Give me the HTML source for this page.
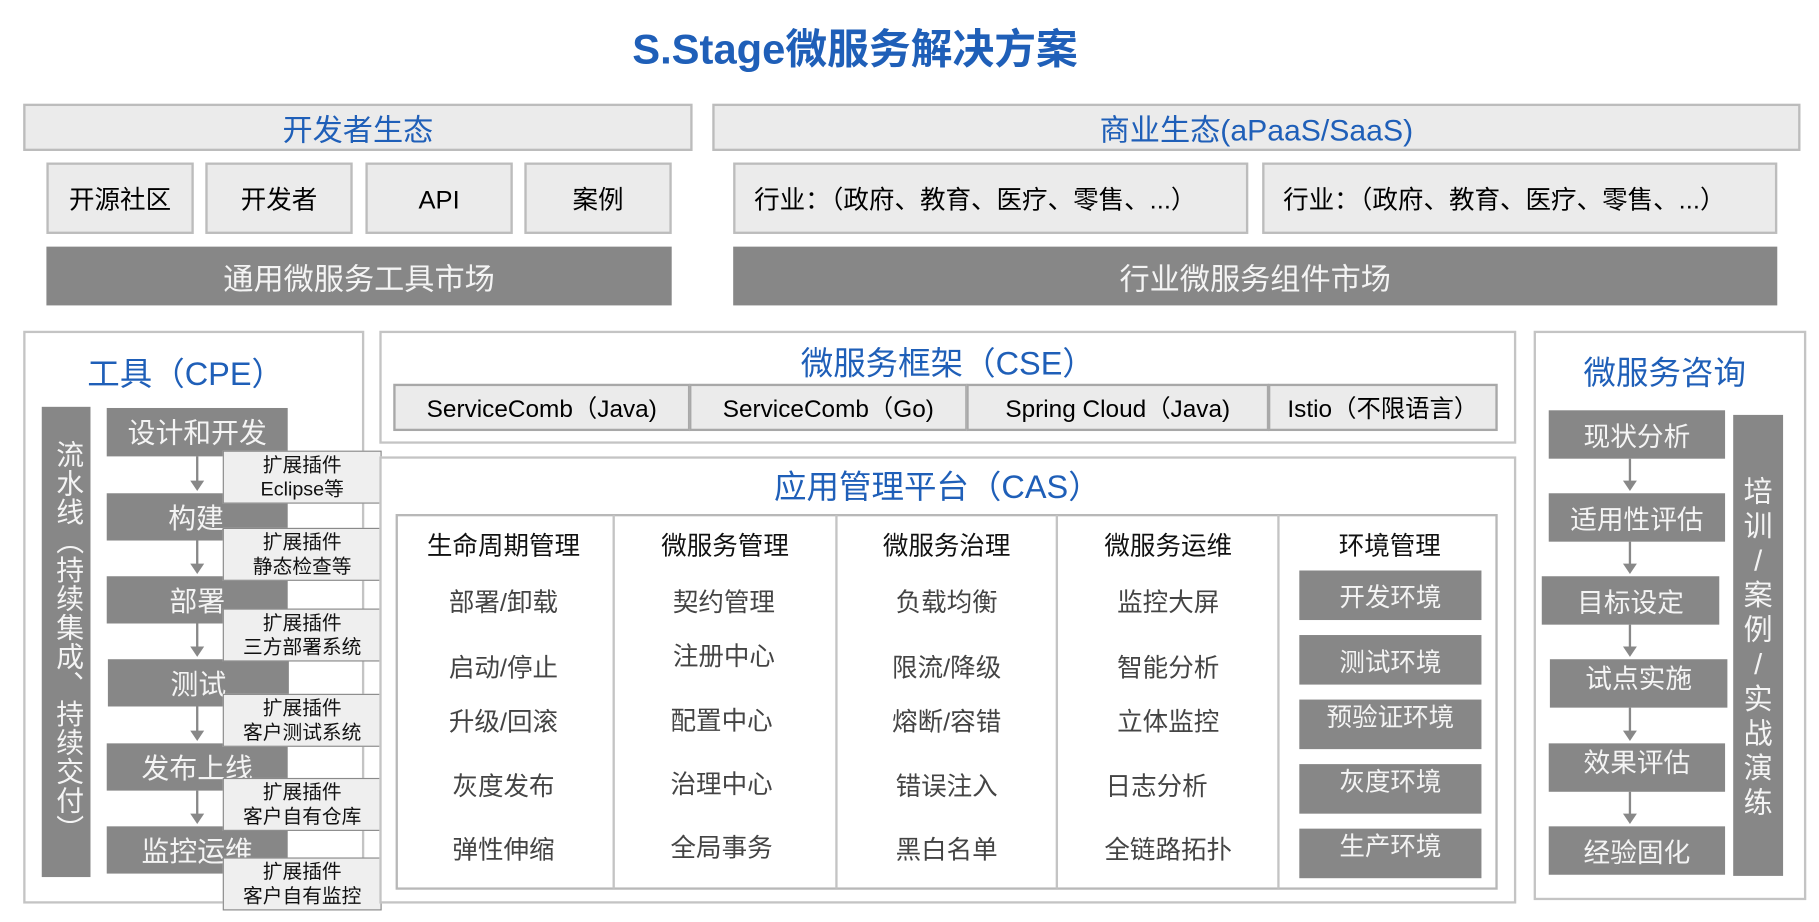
<!DOCTYPE html>
<html><head><meta charset="utf-8"><style>
html,body{margin:0;padding:0;background:#fff;width:1819px;height:922px;overflow:hidden}
#w{position:absolute;left:0;top:0;width:1568px;height:800px;transform-origin:0 0;transform:scale(1.1601,1.1525);font-family:"Liberation Sans","Noto Sans CJK SC",sans-serif}
.a{position:absolute;box-sizing:border-box;display:flex;align-items:center;justify-content:center;white-space:nowrap;line-height:1;padding-top:4px}
.lt{background:#ebebeb;border:2px solid #bcbcbc}
.dk{background:#878787;color:#f4f4f4}
.bl{color:#1f5fb8}
.fr{border:2px solid #c4c4c4;background:#fff}
.pl{background:#efefef;border:1.5px solid #8a8a8a;font-size:17px;flex-direction:column;line-height:21px;color:#111;padding-top:0}
.ar{position:absolute;width:2px;background:#888}
.ar:after{content:"";position:absolute;left:-5px;bottom:-2px;border-left:6px solid transparent;border-right:6px solid transparent;border-top:9px solid #888}
.it{position:absolute;font-size:22px;color:#444;text-align:center;width:190px}
.hd{position:absolute;font-size:22px;color:#111;text-align:center;width:190px;top:456px}
</style></head><body><div id="w">
<div class="a bl" style="left:437px;top:18px;width:600px;height:46px;font-size:36px;font-weight:bold">S.Stage微服务解决方案</div>

<div class="a lt bl" style="left:20px;top:90px;width:577px;height:41px;font-size:26px">开发者生态</div>
<div class="a lt bl" style="left:614px;top:90px;width:938px;height:41px;font-size:26px">商业生态(aPaaS/SaaS)</div>
<div class="a lt" style="left:40px;top:141px;width:127px;height:62px;font-size:22px">开源社区</div>
<div class="a lt" style="left:177px;top:141px;width:127px;height:62px;font-size:22px">开发者</div>
<div class="a lt" style="left:315px;top:141px;width:127px;height:62px;font-size:22px">API</div>
<div class="a lt" style="left:452px;top:141px;width:127px;height:62px;font-size:22px">案例</div>
<div class="a lt" style="left:632px;top:141px;width:444px;height:62px;font-size:22px;justify-content:flex-start;padding-left:16px">行业：（政府、教育、医疗、零售、...）</div>
<div class="a lt" style="left:1088px;top:141px;width:444px;height:62px;font-size:22px;justify-content:flex-start;padding-left:16px">行业：（政府、教育、医疗、零售、...）</div>
<div class="a dk" style="left:40px;top:214px;width:539px;height:51px;font-size:26px">通用微服务工具市场</div>
<div class="a dk" style="left:632px;top:214px;width:900px;height:51px;font-size:26px">行业微服务组件市场</div>

<!-- CPE -->
<div class="a fr" style="left:20px;top:287px;width:294px;height:497px"></div>
<div class="a bl" style="left:60px;top:305px;width:200px;height:36px;font-size:28px">工具（CPE）</div>
<div class="a dk" style="left:36px;top:353px;width:42px;height:408px;font-size:24px;white-space:normal;writing-mode:vertical-rl;line-height:42px;letter-spacing:1px;padding-top:0">流水线（持续集成、持续交付）</div>
<div class="a dk" style="left:92px;top:354px;width:156px;height:42px;font-size:24px">设计和开发</div>
<div class="a dk" style="left:92px;top:428px;width:156px;height:41px;font-size:24px;padding-right:2px">构建</div>
<div class="a dk" style="left:92px;top:500px;width:156px;height:41px;font-size:24px">部署</div>
<div class="a dk" style="left:93px;top:572px;width:156px;height:41px;font-size:24px">测试</div>
<div class="a dk" style="left:92px;top:645px;width:156px;height:41px;font-size:24px">发布上线</div>
<div class="a dk" style="left:92px;top:717px;width:156px;height:41px;font-size:24px">监控运维</div>
<div class="ar" style="left:169px;top:396px;height:28px"></div>
<div class="ar" style="left:169px;top:469px;height:27px"></div>
<div class="ar" style="left:169px;top:541px;height:27px"></div>
<div class="ar" style="left:169px;top:613px;height:28px"></div>
<div class="ar" style="left:169px;top:686px;height:27px"></div>
<div class="a pl" style="left:192px;top:391px;width:137px;height:46px"><span>扩展插件</span><span>Eclipse等</span></div>
<div class="a pl" style="left:192px;top:458px;width:137px;height:46px"><span>扩展插件</span><span>静态检查等</span></div>
<div class="a pl" style="left:192px;top:528px;width:137px;height:46px"><span>扩展插件</span><span>三方部署系统</span></div>
<div class="a pl" style="left:192px;top:602px;width:137px;height:46px"><span>扩展插件</span><span>客户测试系统</span></div>
<div class="a pl" style="left:192px;top:675px;width:137px;height:46px"><span>扩展插件</span><span>客户自有仓库</span></div>
<div class="a pl" style="left:192px;top:744px;width:137px;height:46px"><span>扩展插件</span><span>客户自有监控</span></div>

<!-- CSE -->
<div class="a fr" style="left:327px;top:287px;width:980px;height:98px"></div>
<div class="a bl" style="left:617px;top:297px;width:400px;height:34px;font-size:28px">微服务框架（CSE）</div>
<div class="a lt" style="left:339px;top:333px;width:256px;height:41px;font-size:21px;border-color:#a8a8a8">ServiceComb（Java)</div>
<div class="a lt" style="left:594px;top:333px;width:240px;height:41px;font-size:21px;border-color:#a8a8a8">ServiceComb（Go)</div>
<div class="a lt" style="left:833px;top:333px;width:261px;height:41px;font-size:21px;border-color:#a8a8a8">Spring Cloud（Java)</div>
<div class="a lt" style="left:1093px;top:333px;width:198px;height:41px;font-size:21px;border-color:#a8a8a8">Istio（不限语言）</div>

<!-- CAS -->
<div class="a fr" style="left:327px;top:396px;width:980px;height:388px"></div>
<div class="a bl" style="left:608px;top:403px;width:400px;height:36px;font-size:28px">应用管理平台（CAS）</div>
<div class="a fr" style="left:341px;top:446px;width:950px;height:326px;border-color:#b8b8b8"></div>
<div style="position:absolute;left:528px;top:447px;width:2px;height:324px;background:#c4c4c4"></div>
<div style="position:absolute;left:720px;top:447px;width:2px;height:324px;background:#c4c4c4"></div>
<div style="position:absolute;left:910px;top:447px;width:2px;height:324px;background:#c4c4c4"></div>
<div style="position:absolute;left:1101px;top:447px;width:2px;height:324px;background:#c4c4c4"></div>
<div class="hd" style="left:339px">生命周期管理</div>
<div class="hd" style="left:530px">微服务管理</div>
<div class="hd" style="left:721px">微服务治理</div>
<div class="hd" style="left:912px">微服务运维</div>
<div class="hd" style="left:1103px">环境管理</div>

<div class="it" style="left:339px;top:505px">部署/卸载</div>
<div class="it" style="left:339px;top:562px">启动/停止</div>
<div class="it" style="left:339px;top:609px">升级/回滚</div>
<div class="it" style="left:339px;top:665px">灰度发布</div>
<div class="it" style="left:339px;top:720px">弹性伸缩</div>
<div class="it" style="left:529px;top:505px">契约管理</div>
<div class="it" style="left:529px;top:552px">注册中心</div>
<div class="it" style="left:527px;top:608px">配置中心</div>
<div class="it" style="left:527px;top:663px">治理中心</div>
<div class="it" style="left:527px;top:718px">全局事务</div>
<div class="it" style="left:721px;top:505px">负载均衡</div>
<div class="it" style="left:721px;top:562px">限流/降级</div>
<div class="it" style="left:721px;top:609px">熔断/容错</div>
<div class="it" style="left:721px;top:665px">错误注入</div>
<div class="it" style="left:721px;top:720px">黑白名单</div>
<div class="it" style="left:912px;top:505px">监控大屏</div>
<div class="it" style="left:912px;top:562px">智能分析</div>
<div class="it" style="left:912px;top:609px">立体监控</div>
<div class="it" style="left:902px;top:665px">日志分析</div>
<div class="it" style="left:912px;top:720px">全链路拓扑</div>

<div class="a dk" style="left:1120px;top:495px;width:157px;height:43px;font-size:22px">开发环境</div>
<div class="a dk" style="left:1120px;top:551px;width:157px;height:43px;font-size:22px">测试环境</div>
<div class="a dk" style="left:1120px;top:607px;width:157px;height:43px;font-size:22px;align-items:flex-start;padding-top:5px">预验证环境</div>
<div class="a dk" style="left:1120px;top:663px;width:157px;height:43px;font-size:22px;align-items:flex-start;padding-top:5px">灰度环境</div>
<div class="a dk" style="left:1120px;top:719px;width:157px;height:43px;font-size:22px;align-items:flex-start;padding-top:5px">生产环境</div>

<!-- Consulting -->
<div class="a fr" style="left:1322px;top:287px;width:235px;height:494px"></div>
<div class="a bl" style="left:1335px;top:304px;width:200px;height:36px;font-size:28px">微服务咨询</div>
<div class="a dk" style="left:1335px;top:356px;width:152px;height:42px;font-size:23px">现状分析</div>
<div class="a dk" style="left:1335px;top:428px;width:152px;height:42px;font-size:23px">适用性评估</div>
<div class="a dk" style="left:1329px;top:500px;width:153px;height:42px;font-size:23px">目标设定</div>
<div class="a dk" style="left:1336px;top:572px;width:153px;height:42px;font-size:23px;align-items:flex-start;padding-top:6px">试点实施</div>
<div class="a dk" style="left:1335px;top:645px;width:152px;height:42px;font-size:23px;align-items:flex-start;padding-top:6px">效果评估</div>
<div class="a dk" style="left:1335px;top:717px;width:152px;height:42px;font-size:23px">经验固化</div>
<div class="ar" style="left:1404px;top:398px;height:26px"></div>
<div class="ar" style="left:1404px;top:470px;height:26px"></div>
<div class="ar" style="left:1404px;top:542px;height:26px"></div>
<div class="ar" style="left:1404px;top:614px;height:27px"></div>
<div class="ar" style="left:1404px;top:687px;height:26px"></div>
<div class="a dk" style="left:1494px;top:360px;width:43px;height:400px;font-size:25px;flex-direction:column;line-height:30px;white-space:normal;text-align:center"><span>培</span><span>训</span><span>/</span><span>案</span><span>例</span><span>/</span><span>实</span><span>战</span><span>演</span><span>练</span></div>
</div></body></html>
